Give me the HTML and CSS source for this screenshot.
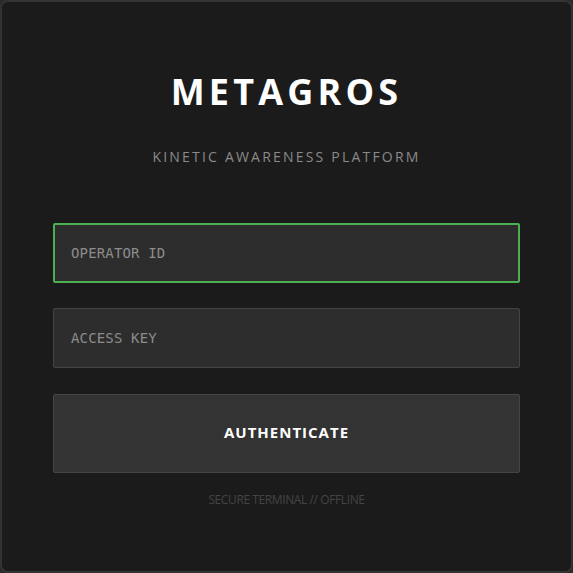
FILE: index.html
```html
<!DOCTYPE html>
<html>
<head>
<meta charset="utf-8">
<link rel="stylesheet" href="styles.css">
</head>
<body>
<div class="card">
  <h1 class="title">METAGROS</h1>
  <p class="subtitle">KINETIC AWARENESS PLATFORM</p>
  <form class="form">
    <input class="field field-active" type="text" placeholder="OPERATOR ID" autofocus>
    <input class="field" type="password" placeholder="ACCESS KEY">
    <button class="btn" type="button">AUTHENTICATE</button>
  </form>
  <p class="footer">SECURE TERMINAL // OFFLINE</p>
</div>
</body>
</html>
```
FILE: styles.css
```css
html, body {
  margin: 0;
  padding: 0;
  background: #2a2a2a;
}
.card {
  box-sizing: border-box;
  width: 573px;
  height: 573px;
  background: #1b1b1b;
  border: 2px solid #333;
  border-radius: 8px;
  padding: 68px 51px 0;
  display: flex;
  flex-direction: column;
  align-items: stretch;
  font-family: "Open Sans", sans-serif;
}
.title {
  margin: 0;
  text-align: center;
  font-size: 36px;
  line-height: 44px;
  font-weight: 700;
  letter-spacing: 4.2px;
  color: #ffffff;
}
.subtitle {
  margin: 33px 0 0;
  text-align: center;
  font-size: 14px;
  line-height: 20px;
  letter-spacing: 2.2px;
  color: #8a8a8a;
}
.form {
  margin-top: 56px;
  display: flex;
  flex-direction: column;
  gap: 25px;
}
.field {
  box-sizing: border-box;
  height: 60px;
  margin: 0;
  padding: 0 17px;
  background: #2d2d2d;
  border: 1px solid #444;
  border-radius: 2px;
  color: #ddd;
  font-family: "DejaVu Sans Mono", monospace;
  font-size: 14px;
  letter-spacing: 0.15px;
  outline: none;
}
.field::placeholder {
  color: #8c8c8c;
}
.field-active {
  border: 2px solid #4caf50;
  padding: 0 16px;
}
.btn {
  box-sizing: border-box;
  height: 79px;
  margin: 1px 0 0;
  padding: 0 0 3px;
  background: #333;
  border: 1px solid #454545;
  border-radius: 2px;
  color: #fff;
  font-family: "Open Sans", sans-serif;
  font-weight: 700;
  font-size: 15px;
  letter-spacing: 1px;
}
.footer {
  margin: 18px 0 0;
  text-align: center;
  font-size: 12px;
  line-height: 17px;
  letter-spacing: -0.4px;
  color: #444;
}
```
